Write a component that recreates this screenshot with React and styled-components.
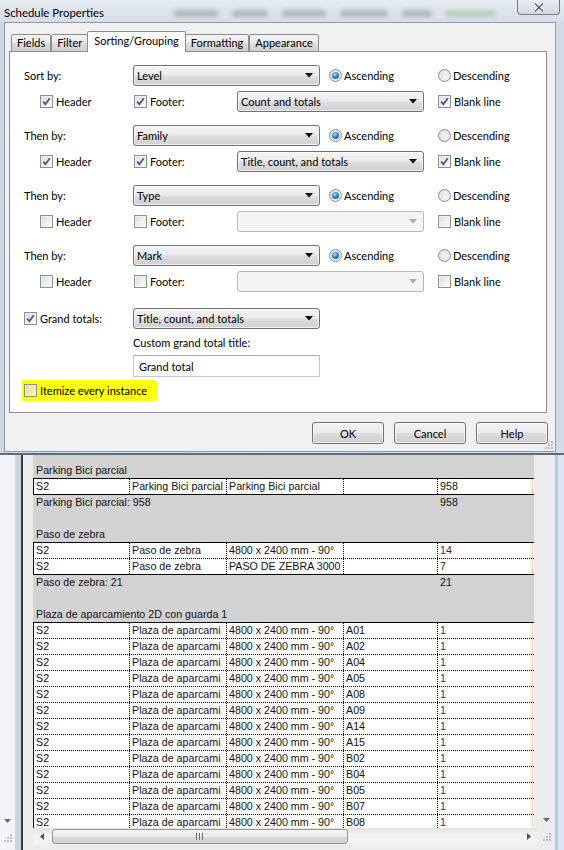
import React from "react";
import styled, { createGlobalStyle } from "styled-components";

const UI_FONT = `Lato, "Liberation Sans", sans-serif`;
const GRID_FONT = `"Liberation Sans", Arial, sans-serif`;

const GlobalStyle = createGlobalStyle`
  html, body {
    margin: 0;
    padding: 0;
  }
  body {
    width: 564px;
    height: 850px;
    overflow: hidden;
    background: #f0f0f0;
    font-family: ${UI_FONT};
  }
`;

const Page = styled.div`
  width: 564px;
  height: 850px;
  display: flex;
  flex-direction: column;
`;

/* ---------- dialog window ---------- */

const Window = styled.div`
  flex: none;
  height: 455px;
  box-sizing: border-box;
  display: flex;
  flex-direction: column;
  background: linear-gradient(90deg, #ccd7e3 0%, #dce4ed 45%, #d2dce7 100%);
  border-bottom: 2px solid #5f6b78;
`;

const TitleBar = styled.div`
  height: 22px;
  flex: none;
  display: flex;
  align-items: center;
  padding: 0 4px;
  background: linear-gradient(180deg, #e6ebf1 0%, #d6dee7 100%);
`;

const Title = styled.div`
  font-size: 11.4px;
  color: #000;
  margin-top: 3px;
`;

const Blurs = styled.div`
  flex: 1;
  display: flex;
  align-items: center;
  gap: 14px;
  padding-left: 70px;
  filter: blur(2px);
`;

const Blob = styled.div`
  width: ${p => p.$w}px;
  height: 7px;
  margin-top: 4px;
  background: ${p => p.$c || "rgba(70, 80, 92, 0.3)"};
  border-radius: 3px;
`;

const CloseButton = styled.div`
  width: 43px;
  height: 15px;
  margin-top: -7px;
  box-sizing: border-box;
  border: 1px solid #6f7c8a;
  border-top: none;
  border-radius: 0 0 4px 4px;
  background: linear-gradient(180deg, #e9eef4 0%, #cfd8e2 100%);
  display: flex;
  align-items: center;
  justify-content: center;
`;

const Body = styled.div`
  flex: 1;
  margin: 0 8px 1px 4px;
  border: 1px solid #8d9aa9;
  background: #f0f0f0;
  display: flex;
  flex-direction: column;
  padding: 8px 8px 0 4px;
  position: relative;
`;

const TabStrip = styled.div`
  display: flex;
  align-items: flex-end;
  height: 21px;
  padding-left: 2px;
  margin-bottom: -1px;
  position: relative;
  z-index: 1;
`;

const Tab = styled.div`
  box-sizing: border-box;
  height: ${p => (p.$active ? 21 : 18)}px;
  padding: 0 ${p => (p.$active ? 6 : 5)}px;
  margin: 0 ${p => (p.$active ? -1 : 0)}px;
  border: 1px solid #898c95;
  border-bottom: ${p => (p.$active ? "none" : "1px solid #898c95")};
  border-radius: 2px 2px 0 0;
  background: ${p =>
    p.$active ? "#fff" : "linear-gradient(180deg, #f3f3f3 0%, #ebebeb 50%, #dddddd 51%, #cfcfcf 100%)"};
  font-size: 11px;
  line-height: ${p => (p.$active ? 18 : 16)}px;
  color: #000;
  & + & {
    border-left: ${p => (p.$active ? "1px solid #898c95" : "none")};
  }
`;

const Panel = styled.div`
  height: 362px;
  box-sizing: border-box;
  border: 1px solid #898c95;
  background: #fff;
  padding: 13px 0 0 14px;
  display: flex;
  flex-direction: column;
  font-size: 11px;
  color: #000;
`;

const Group = styled.div`
  display: flex;
  flex-direction: column;
  gap: 5px;
  margin-bottom: 13px;
`;

const SortLine = styled.div`
  display: grid;
  grid-template-columns: 109px 196px 109px auto;
  align-items: center;
  height: 21px;
`;

const OptionLine = styled.div`
  display: grid;
  grid-template-columns: 109px 104px 201px auto;
  align-items: center;
  height: 21px;
`;

const Field = styled.div`
  display: flex;
  align-items: center;
  gap: ${p => p.$gap ?? 3}px;
  padding-left: ${p => p.$indent || 0}px;
  white-space: nowrap;
`;

const Label = styled.span`
  font-size: 11px;
  color: #000;
  white-space: nowrap;
`;

const Box = styled.span`
  width: 13px;
  height: 13px;
  flex: none;
  box-sizing: border-box;
  border: 1px solid #8e8f8f;
  background: linear-gradient(135deg, rgba(205, 208, 212, 0.75) 0%, rgba(255, 255, 255, 0.55) 100%);
  box-shadow: inset 0 0 0 1px rgba(244, 244, 244, 0.6);
  display: flex;
  align-items: center;
  justify-content: center;
`;

const Check = ({ on }) => (
  <Box>
    {on && (
      <svg width="9" height="9" viewBox="0 0 9 9">
        <path d="M1.2 4.6 L3.4 7.2 L7.8 1.2" fill="none" stroke="#4b5d8c" strokeWidth="1.9" />
      </svg>
    )}
  </Box>
);

const RadioRing = styled.span`
  width: 13px;
  height: 13px;
  flex: none;
  box-sizing: border-box;
  border-radius: 50%;
  border: 1px solid #8b8e93;
  background: radial-gradient(circle at 60% 60%, #f4f4f4 0%, #d9dadc 100%);
  display: flex;
  align-items: center;
  justify-content: center;
`;

const RadioDot = styled.span`
  width: 7px;
  height: 7px;
  border-radius: 50%;
  background: radial-gradient(circle at 40% 35%, #a8e0ff 0%, #2a88d0 45%, #0b3f78 100%);
`;

const Radio = ({ on }) => <RadioRing>{on && <RadioDot />}</RadioRing>;

const SelectBox = styled.div`
  width: 187px;
  height: 21px;
  box-sizing: border-box;
  border: 1px solid ${p => (p.$disabled ? "#b5b8bc" : "#707070")};
  border-radius: 3px;
  background: ${p =>
    p.$disabled
      ? "#f4f4f4"
      : "linear-gradient(180deg, #f3f3f3 0%, #ebebeb 48%, #dddddd 52%, #d0d0d0 100%)"};
  box-shadow: inset 0 0 0 1px ${p => (p.$disabled ? "transparent" : "rgba(255,255,255,0.7)")};
  display: flex;
  align-items: center;
  justify-content: space-between;
  padding: 0 6px 0 3px;
  font-size: 11px;
  color: #000;
`;

const Select = ({ value, disabled }) => (
  <SelectBox $disabled={disabled}>
    <span>{value}</span>
    <svg width="8" height="5" viewBox="0 0 8 5">
      <path d="M0 0 H8 L4 4.5 Z" fill={disabled ? "#a9a9a9" : "#000"} />
    </svg>
  </SelectBox>
);

const SubLabel = styled.div`
  margin: 7px 0 0 109px;
  font-size: 11px;
  line-height: 14px;
`;

const TextInput = styled.div`
  margin: 5px 0 0 109px;
  width: 187px;
  height: 22px;
  box-sizing: border-box;
  border: 1px solid #c5c8cc;
  border-top-color: #abadb3;
  background: #fff;
  display: flex;
  align-items: center;
  padding-left: 5px;
  font-size: 11px;
`;

const Highlight = styled.div`
  align-self: flex-start;
  margin: 3px 0 0 -2px;
  height: 21px;
  display: flex;
  align-items: center;
  gap: 3px;
  padding: 0 10px 0 2px;
  background: #ffff10;
  border-radius: 1px 4px 2px 1px;
`;

const Footer = styled.div`
  display: flex;
  justify-content: flex-end;
  gap: 10px;
  margin: 9px -1px 0 0;
`;

const Button = styled.div`
  width: 72px;
  height: 22px;
  box-sizing: border-box;
  border: 1px solid #707070;
  border-radius: 3px;
  background: linear-gradient(180deg, #f2f2f2 0%, #ebebeb 48%, #dddddd 52%, #cfcfcf 100%);
  box-shadow: inset 0 0 0 1px rgba(255, 255, 255, 0.75);
  display: flex;
  align-items: center;
  justify-content: center;
  font-size: 11px;
  color: #000;
`;

const Grip = styled.svg`
  position: absolute;
  right: 1px;
  bottom: 1px;
`;

const gripPoints = [
  [8, 2],
  [5, 5],
  [8, 5],
  [2, 8],
  [5, 8],
  [8, 8],
];

const GripDots = () => (
  <Grip width="11" height="11" viewBox="0 0 11 11">
    {gripPoints.map(([x, y]) => (
      <rect key={`${x}-${y}`} x={x} y={y} width="2" height="2" fill="#b8bcc2" />
    ))}
  </Grip>
);

/* ---------- schedule view behind the dialog ---------- */

const ScheduleArea = styled.div`
  flex: 1;
  min-height: 0;
  display: flex;
  background: #f0f0f0;
`;

const SidePane = styled.div`
  width: 15px;
  flex: none;
  display: flex;
  flex-direction: column;
  justify-content: flex-end;
  align-items: center;
  padding-bottom: 4px;
  background: #f3f5f8;
`;

const SideBand = styled.div`
  width: 6px;
  flex: none;
  background: #c9d5e2;
`;

const Divider = styled.div`
  width: 2px;
  flex: none;
  background: #3a3a3a;
`;

const View = styled.div`
  flex: 1;
  min-width: 0;
  display: flex;
  flex-direction: column;
  background: #ececec;
  padding: 0 0 5px 10px;
`;

const TableClip = styled.div`
  flex: 1;
  min-height: 0;
  overflow: hidden;
  font-family: ${GRID_FONT};
  font-size: 10.7px;
  color: #111;
`;

const GrayRow = styled.div`
  width: 501px;
  height: ${p => p.$h || 16}px;
  box-sizing: border-box;
  background: #d3d3d3;
  display: grid;
  grid-template-columns: 404px 97px;
  align-items: center;
  line-height: 15px;
  border-top: ${p => (p.$closing ? "1px solid #000" : "none")};
`;

const GrayText = styled.div`
  padding-left: 3px;
  white-space: nowrap;
`;

const DataRow = styled.div`
  width: 501px;
  height: 16px;
  box-sizing: border-box;
  background: #fff;
  display: grid;
  grid-template-columns: 96px 97px 117px 94px 95px 2px;
  border-top: 1px ${p => (p.$first ? "solid" : "dotted")} #000;
`;

const Cell = styled.div`
  box-sizing: border-box;
  padding-left: 2px;
  line-height: 14px;
  white-space: nowrap;
  overflow: hidden;
  color: ${p => p.$color || "#111"};
  border-left: 1px ${p => (p.$edge ? "solid #000" : "dotted #000")};
  &:last-child {
    border-left: 1px dashed #f2c58a;
  }
`;

const HScroll = styled.div`
  height: 17px;
  width: 504px;
  flex: none;
  display: flex;
  align-items: center;
  background: linear-gradient(180deg, #e3e3e3 0%, #f2f2f2 40%, #f2f2f2 100%);
`;

const ArrowCell = styled.div`
  width: 17px;
  height: 17px;
  flex: none;
  display: flex;
  align-items: center;
  justify-content: center;
`;

const Thumb = styled.div`
  width: 296px;
  height: 15px;
  margin-left: 2px;
  box-sizing: border-box;
  border: 1px solid #979797;
  border-radius: 3px;
  background: linear-gradient(180deg, #f6f6f6 0%, #e9e9e9 50%, #dadada 51%, #d4d4d4 100%);
  display: flex;
  align-items: center;
  justify-content: center;
`;

const Spacer = styled.div`
  flex: 1;
`;

const VScroll = styled.div`
  width: 18px;
  flex: none;
  display: flex;
  flex-direction: column;
  justify-content: flex-end;
  align-items: center;
  padding-bottom: 5px;
  background: #ececec;
`;

const FrameEdge = styled.div`
  width: 3px;
  flex: none;
  background: #b6cbe1;
`;

const FrameOuter = styled.div`
  width: 6px;
  flex: none;
  background: #dbe6f2;
`;

const Tri = ({ dir, color = "#505050" }) => {
  const d = {
    down: "M0 0 H7 L3.5 4 Z",
    left: "M4 0 V7 L0 3.5 Z",
    right: "M0 0 V7 L4 3.5 Z",
  }[dir];
  const w = dir === "down" ? 7 : 4;
  const h = dir === "down" ? 4 : 7;
  return (
    <svg width={w} height={h} viewBox={`0 0 ${w} ${h}`}>
      <path d={d} fill={color} />
    </svg>
  );
};

const CornerGrip = () => (
  <svg width="11" height="11" viewBox="0 0 11 11">
    {gripPoints.map(([x, y]) => (
      <rect key={`${x}-${y}`} x={x} y={y} width="2" height="2" fill="#b9bdc4" />
    ))}
  </svg>
);

const GripLines = () => (
  <svg width="8" height="7" viewBox="0 0 8 7">
    <rect x="0" y="0" width="1" height="7" fill="#6d6d6d" />
    <rect x="3" y="0" width="1" height="7" fill="#6d6d6d" />
    <rect x="6" y="0" width="1" height="7" fill="#6d6d6d" />
  </svg>
);

/* ---------- data ---------- */

const sortGroups = [
  { label: "Sort by:", field: "Level", header: true, footer: true, total: "Count and totals", blank: true },
  { label: "Then by:", field: "Family", header: true, footer: true, total: "Title, count, and totals", blank: true },
  { label: "Then by:", field: "Type", header: false, footer: false, total: "", blank: false },
  { label: "Then by:", field: "Mark", header: false, footer: false, total: "", blank: false },
];

const tabs = ["Fields", "Filter", "Sorting/Grouping", "Formatting", "Appearance"];

const MAROON = "#6a1038";
const plazaMarks = ["A01", "A02", "A04", "A05", "A08", "A09", "A14", "A15", "B02", "B04", "B05", "B07", "B08"];

const rows = [
  { kind: "gap" },
  { kind: "group", text: "Parking Bici parcial" },
  { kind: "data", first: true, cells: ["S2", "Parking Bici parcial", "Parking Bici parcial", "", "958"], color: "#111" },
  { kind: "total", text: "Parking Bici parcial: 958", value: "958" },
  { kind: "blank" },
  { kind: "group", text: "Paso de zebra" },
  { kind: "data", first: true, cells: ["S2", "Paso de zebra", "4800 x 2400 mm - 90°", "", "14"], color: MAROON },
  { kind: "data", cells: ["S2", "Paso de zebra", "PASO DE ZEBRA 3000", "", "7"], color: "#2a1020" },
  { kind: "total", text: "Paso de zebra: 21", value: "21" },
  { kind: "blank" },
  { kind: "group", text: "Plaza de aparcamiento 2D con guarda 1" },
  ...plazaMarks.map((m, i) => ({
    kind: "data",
    first: i === 0,
    cells: ["S2", "Plaza de aparcami", "4800 x 2400 mm - 90°", m, "1"],
    color: MAROON,
  })),
];

const ScheduleRow = ({ row }) => {
  if (row.kind === "gap") return <GrayRow $h={7} />;
  if (row.kind === "blank") return <GrayRow />;
  if (row.kind === "group")
    return (
      <GrayRow>
        <GrayText>{row.text}</GrayText>
      </GrayRow>
    );
  if (row.kind === "total")
    return (
      <GrayRow $closing>
        <GrayText>{row.text}</GrayText>
        <GrayText>{row.value}</GrayText>
      </GrayRow>
    );
  return (
    <DataRow $first={row.first}>
      {row.cells.map((c, i) => (
        <Cell key={i} $edge={i === 0} $color={i === 4 ? row.color : undefined}>
          {c}
        </Cell>
      ))}
      <Cell />
    </DataRow>
  );
};

export default function App() {
  return (
    <Page>
      <GlobalStyle />
      <Window>
        <TitleBar>
          <Title>Schedule Properties</Title>
          <Blurs>
            <Blob $w={44} />
            <Blob $w={36} />
            <Blob $w={44} />
            <Blob $w={48} />
            <Blob $w={30} />
            <Blob $w={50} $c="rgba(120, 170, 110, 0.35)" />
          </Blurs>
          <CloseButton>
            <svg width="10" height="9" viewBox="0 0 10 9">
              <path d="M1 0.5 L9 8.5 M9 0.5 L1 8.5" stroke="#fff" strokeWidth="3" />
              <path d="M1 0.5 L9 8.5 M9 0.5 L1 8.5" stroke="#4a5360" strokeWidth="1.3" />
            </svg>
          </CloseButton>
        </TitleBar>
        <Body>
          <TabStrip>
            {tabs.map(t => (
              <Tab key={t} $active={t === "Sorting/Grouping"}>
                {t}
              </Tab>
            ))}
          </TabStrip>
          <Panel>
            {sortGroups.map((g, i) => (
              <Group key={i}>
                <SortLine>
                  <Label>{g.label}</Label>
                  <Select value={g.field} />
                  <Field $gap={2}>
                    <Radio on />
                    <Label>Ascending</Label>
                  </Field>
                  <Field $gap={2}>
                    <Radio />
                    <Label>Descending</Label>
                  </Field>
                </SortLine>
                <OptionLine>
                  <Field $indent={16}>
                    <Check on={g.header} />
                    <Label>Header</Label>
                  </Field>
                  <Field $indent={1}>
                    <Check on={g.footer} />
                    <Label>Footer:</Label>
                  </Field>
                  <Select value={g.total} disabled={!g.footer} />
                  <Field>
                    <Check on={g.blank} />
                    <Label>Blank line</Label>
                  </Field>
                </OptionLine>
              </Group>
            ))}
            <SortLine style={{ marginTop: 3 }}>
              <Field>
                <Check on />
                <Label>Grand totals:</Label>
              </Field>
              <Select value="Title, count, and totals" />
            </SortLine>
            <SubLabel>Custom grand total title:</SubLabel>
            <TextInput>Grand total</TextInput>
            <Highlight>
              <Check />
              <Label>Itemize every instance</Label>
            </Highlight>
          </Panel>
          <Footer>
            <Button>OK</Button>
            <Button>Cancel</Button>
            <Button>Help</Button>
          </Footer>
          <GripDots />
        </Body>
      </Window>
      <ScheduleArea>
        <SidePane>
          <ArrowCell>
            <Tri dir="down" color="#6a6a6a" />
          </ArrowCell>
          <ArrowCell>
            <CornerGrip />
          </ArrowCell>
        </SidePane>
        <SideBand />
        <Divider />
        <View>
          <TableClip>
            {rows.map((r, i) => (
              <ScheduleRow key={i} row={r} />
            ))}
          </TableClip>
          <HScroll>
            <ArrowCell>
              <Tri dir="left" />
            </ArrowCell>
            <Thumb>
              <GripLines />
            </Thumb>
            <Spacer />
            <ArrowCell>
              <Tri dir="right" />
            </ArrowCell>
          </HScroll>
        </View>
        <VScroll>
          <ArrowCell>
            <Tri dir="down" color="#6a6a6a" />
          </ArrowCell>
          <ArrowCell>
            <CornerGrip />
          </ArrowCell>
        </VScroll>
        <FrameEdge />
        <FrameOuter />
      </ScheduleArea>
    </Page>
  );
}
